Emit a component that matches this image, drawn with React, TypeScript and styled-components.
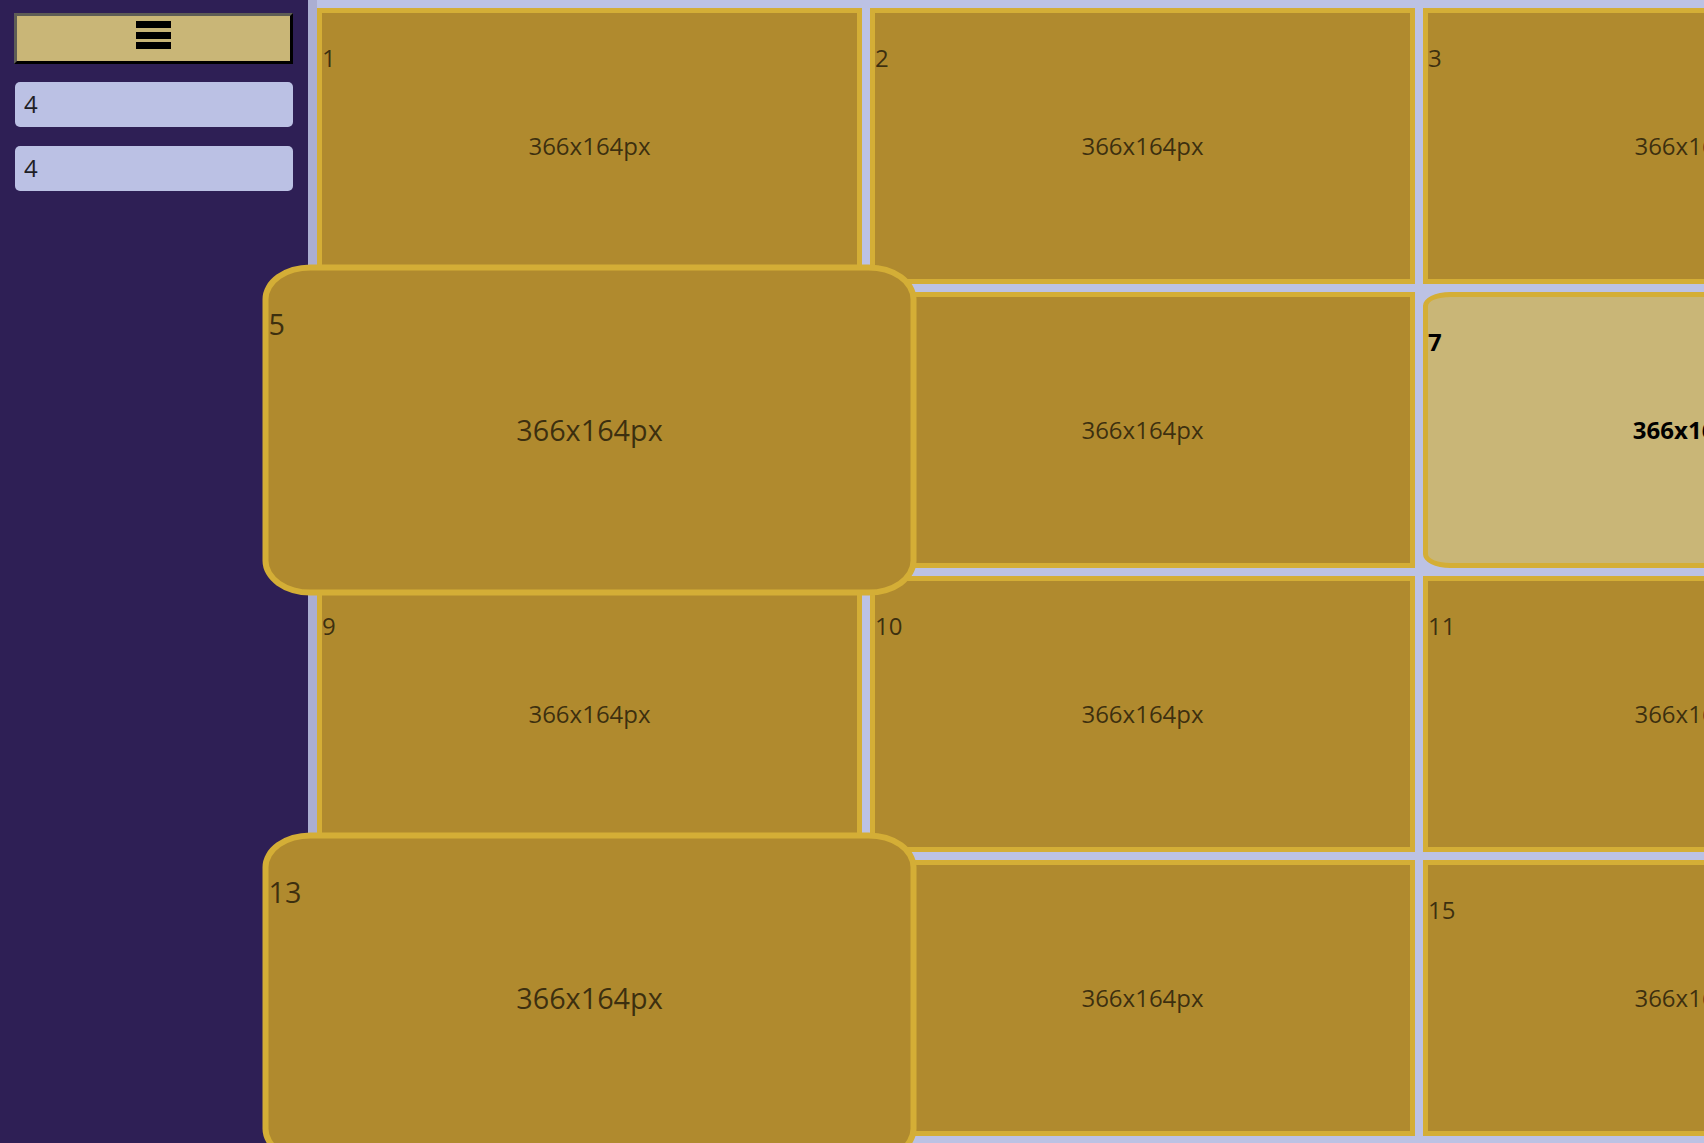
import React from "react";
import styled, { createGlobalStyle, css } from "styled-components";

const GlobalStyle = createGlobalStyle`
  html, body {
    margin: 0;
    padding: 0;
    height: 100%;
    overflow: hidden;
  }
  body {
    font-family: "Open Sans", "Noto Sans", sans-serif;
  }
  #root {
    height: 100%;
  }
`;

const Layout = styled.div`
  display: flex;
  width: 100vw;
  height: 100vh;
  overflow: hidden;
  background: #bcc2e4;
`;

const Sidebar = styled.aside`
  position: relative;
  z-index: 1;
  flex: 0 0 308px;
  box-sizing: border-box;
  background: #2e1f55;
  box-shadow: 9px 0 0 rgba(46, 31, 85, 0.12);
  padding: 13px 11px 0 14px;
  display: flex;
  flex-direction: column;
  align-items: flex-start;
`;

const MenuButton = styled.button`
  box-sizing: border-box;
  width: 279px;
  height: 51px;
  margin: 0;
  padding: 5px 0 0;
  background: #c9b677;
  border: 3px solid;
  border-color: #5e5d55 #000 #000 #5e5d55;
  display: flex;
  justify-content: center;
  align-items: flex-start;
  cursor: pointer;
`;

const NumberField = styled.input`
  box-sizing: border-box;
  width: 278px;
  height: 45px;
  margin: 18px 0 0 1px;
  padding: 0 9px 2px;
  border: none;
  border-radius: 5px;
  background: #bbc1e4;
  color: #1e1e24;
  font-family: "Open Sans", "Noto Sans", sans-serif;
  font-size: 24px;
  outline: none;

  & + & {
    margin-top: 19px;
  }
`;

const Main = styled.main`
  flex: 1 1 auto;
  min-width: 0;
  padding: 8px 0 0 9px;
`;

const Grid = styled.div`
  display: grid;
  grid-template-columns: repeat(4, 545px);
  grid-auto-rows: 276px;
  gap: 8px;
`;

type CardProps = { $variant?: "normal" | "zoomed" | "active" };

const Card = styled.div<CardProps>`
  position: relative;
  box-sizing: border-box;
  display: grid;
  grid-template-rows: 1fr auto 1fr;
  justify-items: center;
  border: 5px solid #d4ae36;
  background: #b08a2e;
  color: rgba(0, 0, 0, 0.67);
  font-size: 24px;
  line-height: 1.362;

  ${(p) =>
    p.$variant === "zoomed" &&
    css`
      z-index: 2;
      transform: scale(1.2);
      border-radius: 40px / 29px;
    `}

  ${(p) =>
    p.$variant === "active" &&
    css`
      background: #c9b677;
      color: #000;
      font-weight: 700;
      border-radius: 5%;
    `}
`;

const CardLabel = styled.span`
  justify-self: start;
  align-self: start;
  margin-top: 29px;
`;

const CardSize = styled.span`
  grid-row: 2;
`;

const HamburgerIcon = () => (
  <svg width="35" height="29" viewBox="0 0 35 29" aria-hidden="true">
    <rect x="0" y="0" width="35" height="7" fill="#000" />
    <rect x="0" y="11" width="35" height="7" fill="#000" />
    <rect x="0" y="21" width="35" height="7" fill="#000" />
  </svg>
);

const cards = Array.from({ length: 16 }, (_, i) => i + 1);

function variantFor(n: number): CardProps["$variant"] {
  if (n === 5 || n === 13) return "zoomed";
  if (n === 7) return "active";
  return "normal";
}

export default function App() {
  return (
    <>
      <GlobalStyle />
      <Layout>
        <Sidebar>
          <MenuButton aria-label="Menu">
            <HamburgerIcon />
          </MenuButton>
          <NumberField type="text" defaultValue="4" />
          <NumberField type="text" defaultValue="4" />
        </Sidebar>
        <Main>
          <Grid>
            {cards.map((n) => (
              <Card key={n} $variant={variantFor(n)}>
                <CardLabel>{n}</CardLabel>
                <CardSize>366x164px</CardSize>
              </Card>
            ))}
          </Grid>
        </Main>
      </Layout>
    </>
  );
}
